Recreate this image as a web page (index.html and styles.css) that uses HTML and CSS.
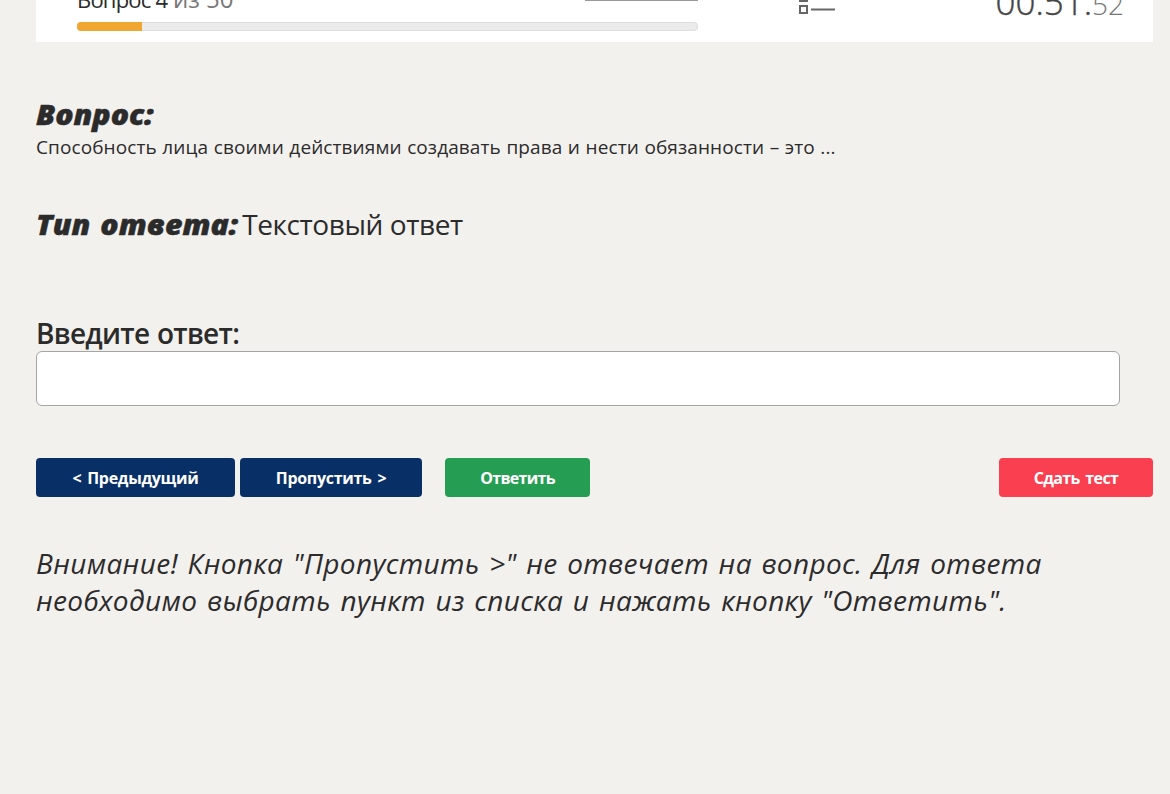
FILE: index.html
```html
<!DOCTYPE html>
<html lang="ru">
<head>
    <meta charset="UTF-8">
    <meta name="viewport" content="width=device-width, initial-scale=1.0">
    <title>Тест - Вопрос 4</title>
    <link rel="stylesheet" href="styles.css">
</head>
<body>
    <div class="container">
        <header class="test-header">
            <div class="progress-block">
                <div class="progress-top">
                    <p class="counter"><span class="current">Вопрос 4</span> <span class="total">из 50</span></p>
                    <span class="header-line"></span>
                </div>
                <div class="progress">
                    <div class="progress-bar"></div>
                </div>
            </div>
            <svg class="list-icon" width="38" height="34" viewBox="0 0 38 34" fill="none" stroke="#666" stroke-width="2">
                <rect x="2" y="2" width="7" height="7"/>
                <path d="M13 5.5H37"/>
                <rect x="2" y="14" width="7" height="7"/>
                <path d="M13 17.5H37"/>
                <rect x="2" y="26" width="7" height="7"/>
                <path d="M13 29.5H37"/>
            </svg>
            <div class="timer">00:51.<span class="timer-ms">52</span></div>
        </header>

        <main>
            <section class="question">
                <h2>Вопрос:</h2>
                <p>Способность лица своими действиями создавать права и нести обязанности – это ...</p>
            </section>

            <section class="answer-type">
                <h2>Тип ответа:</h2>
                <p>Текстовый ответ</p>
            </section>

            <form class="answer-form">
                <label for="answer">Введите ответ:</label>
                <input type="text" id="answer" name="answer">
                <div class="buttons">
                    <button type="button" class="btn btn-prev">&lt; Предыдущий</button>
                    <button type="button" class="btn btn-skip">Пропустить &gt;</button>
                    <button type="button" class="btn btn-answer">Ответить</button>
                    <button type="button" class="btn btn-finish">Сдать тест</button>
                </div>
            </form>

            <p class="notice">Внимание! Кнопка "Пропустить &gt;" не отвечает на вопрос. Для ответа<br>необходимо выбрать пункт из списка и нажать кнопку "Ответить".</p>
        </main>
    </div>
</body>
</html>
```
FILE: styles.css
```css
body {
    font-family: "Open Sans", "Noto Sans", sans-serif;
    margin: 0;
    background-color: #f3f1ee;
    color: #2b2b2b;
}
h2, p {
    margin: 0;
}
.container {
    padding: 0 17px 0 36px;
}
.test-header {
    display: flex;
    align-items: flex-end;
    height: 42px;
    padding: 0 29px 0 41px;
    box-sizing: border-box;
    overflow: hidden;
    background-color: #fff;
}
.progress-block {
    width: 621px;
    margin-bottom: 11px;
}
.progress-top {
    display: flex;
    justify-content: space-between;
    align-items: flex-end;
    height: 30px;
    margin-bottom: 8px;
}
.counter {
    font-size: 22px;
    line-height: 30px;
    white-space: nowrap;
}
.current {
    letter-spacing: -0.8px;
}
.total {
    font-size: 24px;
    color: #777;
}
.header-line {
    width: 113px;
    height: 2px;
    margin-bottom: 13px;
    background-color: #999;
}
.progress {
    height: 9px;
    box-sizing: border-box;
    border: 1px solid #dedede;
    border-radius: 4px;
    background-color: #ebebeb;
}
.progress-bar {
    width: 65px;
    height: 9px;
    margin: -1px;
    border-radius: 4px 0 0 4px;
    background-color: #f0a732;
}
.list-icon {
    flex: none;
    margin: 0 0 28px 100px;
}
.timer {
    margin: 0 0 15px auto;
    font-size: 35px;
    font-weight: 300;
    line-height: 46px;
    color: #444;
    -webkit-text-stroke: 0.4px #444;
}
.timer-ms {
    font-size: 28px;
    color: #777;
    -webkit-text-stroke: 0;
}
.question {
    padding-top: 53px;
}
.question h2, .answer-type h2 {
    width: fit-content;
    font-size: 28px;
    font-weight: 800;
    font-style: italic;
    line-height: 38px;
    word-spacing: 2px;
    -webkit-text-stroke: 0.5px #2b2b2b;
    transform: scaleX(1.08);
    transform-origin: left;
}
.question p {
    font-size: 19px;
    line-height: 28px;
    letter-spacing: 0.1px;
    word-spacing: 0.5px;
    white-space: nowrap;
}
.answer-type {
    display: flex;
    align-items: baseline;
    gap: 19px;
    margin-top: 44px;
}
.answer-type p {
    font-size: 28px;
    line-height: 38px;
    letter-spacing: -0.4px;
}
.answer-form {
    margin-top: 71px;
}
.answer-form label {
    display: block;
    font-size: 28px;
    font-weight: 600;
    line-height: 38px;
    letter-spacing: -0.7px;
    word-spacing: 1px;
}
.answer-form input {
    display: block;
    width: 1084px;
    height: 55px;
    margin-top: -1px;
    box-sizing: border-box;
    border: 1px solid #a5a5a5;
    border-radius: 6px;
    background-color: #fff;
}
.buttons {
    display: flex;
    margin-top: 52px;
}
.btn {
    height: 39px;
    padding: 0;
    border: none;
    border-radius: 4px;
    font-family: inherit;
    font-size: 16px;
    font-weight: 700;
    letter-spacing: -0.3px;
    word-spacing: 2px;
    color: #fff;
    cursor: pointer;
}
.btn-prev {
    width: 199px;
    margin-right: 5px;
    background-color: #082f66;
}
.btn-skip {
    width: 182px;
    margin-right: 23px;
    background-color: #082f66;
}
.btn-answer {
    width: 145px;
    letter-spacing: -0.7px;
    background-color: #259e54;
}
.btn-finish {
    width: 154px;
    margin-left: auto;
    letter-spacing: -0.6px;
    background-color: #f93f50;
}
.notice {
    margin-top: 48px;
    font-size: 28px;
    font-style: italic;
    line-height: 37px;
    letter-spacing: 0.35px;
    word-spacing: 2px;
    white-space: nowrap;
}
```
